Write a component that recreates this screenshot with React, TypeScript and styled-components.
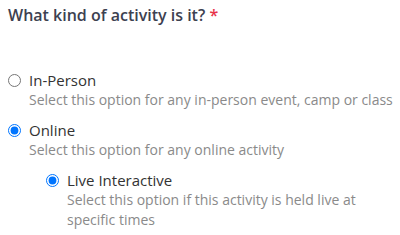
import styled, { createGlobalStyle } from 'styled-components';

const GlobalStyle = createGlobalStyle`
    body {
        margin: 0;
        background: #ffffff;
        font-family: 'Open Sans', sans-serif;
    }
`;

interface OptionData {
    id: string;
    label: string;
    description: string;
    checked: boolean;
}

const Option = ({ option, nested }: { option: OptionData; nested?: boolean }) => (
    <OptionRow nested={nested}>
        <Radio type="radio" name={nested ? 'format' : 'kind'} checked={option.checked} readOnly />
        <OptionText>
            <OptionLabel>{option.label}</OptionLabel>
            <OptionDesc>{option.description}</OptionDesc>
        </OptionText>
    </OptionRow>
);

const App = () => {
    return (
        <>
            <GlobalStyle />
            <Wrapper>
                <Title>
                    What kind of activity is it? <Required>*</Required>
                </Title>
                <OptionList>
                    <Option
                        option={{
                            id: 'in-person',
                            label: 'In-Person',
                            description: 'Select this option for any in-person event, camp or class',
                            checked: false,
                        }}
                    />
                    <Option
                        option={{
                            id: 'online',
                            label: 'Online',
                            description: 'Select this option for any online activity',
                            checked: true,
                        }}
                    />
                    <Option
                        nested
                        option={{
                            id: 'live',
                            label: 'Live Interactive',
                            description: 'Select this option if this activity is held live at specific times',
                            checked: true,
                        }}
                    />
                </OptionList>
            </Wrapper>
        </>
    );
};

const Wrapper = styled.div`
    padding: 4px 0 0 7px;
`;

const Title = styled.div`
    font-size: 16px;
    font-weight: 600;
    line-height: 22px;
    color: #3d4150;
    padding-left: 1px;
`;

const Required = styled.span`
    color: #e8334a;
`;

const OptionList = styled.div`
    margin-top: 44px;
    display: flex;
    flex-direction: column;
    gap: 10px;
`;

const OptionRow = styled.div<{ nested?: boolean }>`
    display: flex;
    align-items: flex-start;
    gap: 7px;
    padding-left: ${({ nested }) => (nested ? '38px' : '0')};
`;

const Radio = styled.input`
    margin: 4px 1px 0 1px;
    width: 13px;
    height: 13px;
    flex-shrink: 0;
`;

const OptionText = styled.div`
    display: flex;
    flex-direction: column;
`;

const OptionLabel = styled.div`
    font-size: 15px;
    line-height: 20px;
    color: #333333;
`;

const OptionDesc = styled.div`
    font-size: 14px;
    line-height: 20px;
    color: #8a8a8a;
`;

export default App;
